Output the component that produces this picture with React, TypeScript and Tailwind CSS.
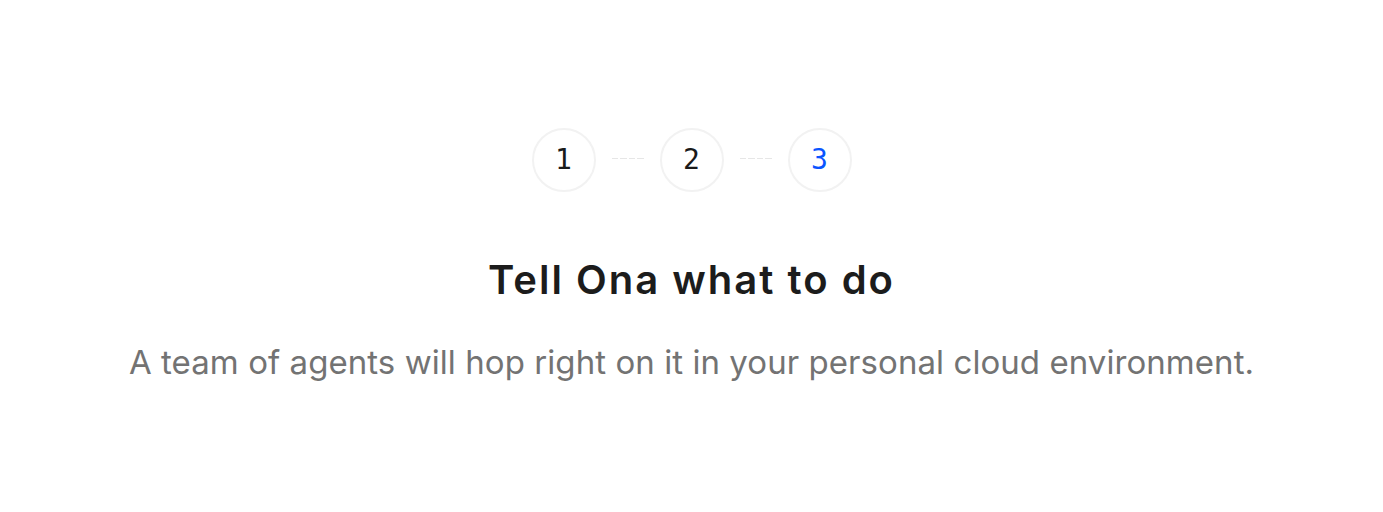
export default function App() {
  const steps = [
    { n: "1", active: false },
    { n: "2", active: false },
    { n: "3", active: true },
  ];

  return (
    <div className="flex h-[512px] w-full flex-col items-center bg-white pt-[128px] font-['Inter',sans-serif]">
      <div className="flex items-center">
        {steps.map((step, i) => (
          <div key={step.n} className="flex items-center">
            {i > 0 && (
              <div className="mx-4 flex w-8 -translate-y-[2px] gap-[2px]">
                <span className="h-px w-[6.5px] bg-[#e6e6e6]" />
                <span className="h-px w-[6.5px] bg-[#e6e6e6]" />
                <span className="h-px w-[6.5px] bg-[#e6e6e6]" />
                <span className="h-px w-[6.5px] bg-[#e6e6e6]" />
              </div>
            )}
            <div
              className={
                step.active
                  ? "flex h-16 w-16 items-center justify-center rounded-full border-2 border-[#f2f2f2] font-['DejaVu_Sans_Mono',monospace] text-[28px] text-[#0a55ff]"
                  : "flex h-16 w-16 items-center justify-center rounded-full border-2 border-[#f2f2f2] font-['DejaVu_Sans_Mono',monospace] text-[28px] text-[#1a1a1a]"
              }
            >
              {step.n}
            </div>
          </div>
        ))}
      </div>

      <h1 className="mt-[64px] text-[40px] font-semibold leading-[48px] tracking-[2px] text-[#1c1c1c]">
        Tell Ona what to do
      </h1>
      <p className="mt-[38px] text-[33px] leading-[40px] tracking-[0.06px] text-[#737373]">
        A team of agents will hop right on it in your personal cloud environment.
      </p>
    </div>
  );
}
